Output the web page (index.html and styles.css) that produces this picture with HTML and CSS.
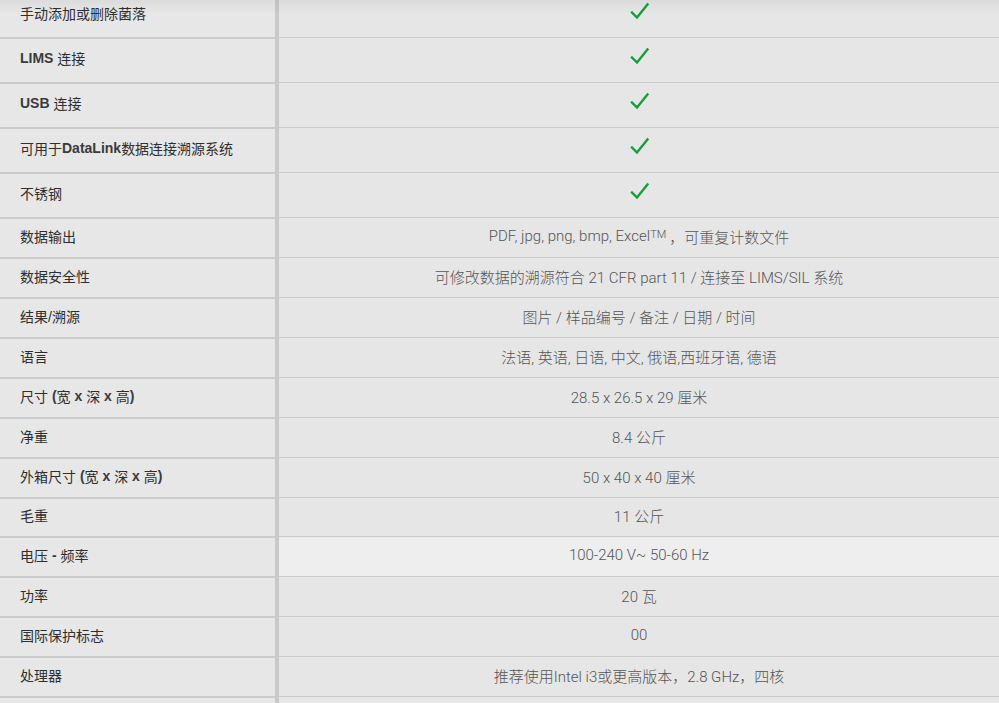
FILE: index.html
```html
<!DOCTYPE html>
<html lang="zh-CN">
<head>
<meta charset="utf-8">
<title>规格</title>
<link rel="stylesheet" href="styles.css">
</head>
<body>
<div class="viewport">
  <div class="shade"></div>
  <div class="spec">
    <div class="row tall"><div class="key">手动添加或删除菌落</div><div class="val"><svg class="check" viewBox="0 0 20 20" width="20" height="20"><polyline points="2,10.5 7,15.5 17.5,2.5"/></svg></div></div>
    <div class="row tall"><div class="key"><span class="lat">LIMS</span>&nbsp;连接</div><div class="val"><svg class="check" viewBox="0 0 20 20" width="20" height="20"><polyline points="2,10.5 7,15.5 17.5,2.5"/></svg></div></div>
    <div class="row tall"><div class="key"><span class="lat">USB</span>&nbsp;连接</div><div class="val"><svg class="check" viewBox="0 0 20 20" width="20" height="20"><polyline points="2,10.5 7,15.5 17.5,2.5"/></svg></div></div>
    <div class="row tall"><div class="key">可用于<span class="lat">DataLink</span>数据连接溯源系统</div><div class="val"><svg class="check" viewBox="0 0 20 20" width="20" height="20"><polyline points="2,10.5 7,15.5 17.5,2.5"/></svg></div></div>
    <div class="row tall"><div class="key">不锈钢</div><div class="val"><svg class="check" viewBox="0 0 20 20" width="20" height="20"><polyline points="2,10.5 7,15.5 17.5,2.5"/></svg></div></div>
    <div class="row"><div class="key">数据输出</div><div class="val">PDF, jpg, png, bmp, Excel<sup>TM</sup>，可重复计数文件</div></div>
    <div class="row"><div class="key">数据安全性</div><div class="val">可修改数据的溯源符合 21 CFR part 11 / 连接至 LIMS/SIL 系统</div></div>
    <div class="row"><div class="key">结果/溯源</div><div class="val">图片 / 样品编号 / 备注 / 日期 / 时间</div></div>
    <div class="row"><div class="key">语言</div><div class="val">法语, 英语, 日语, 中文, 俄语,西班牙语, 德语</div></div>
    <div class="row"><div class="key">尺寸 <span class="lat">(</span>宽 <span class="lat">x</span> 深 <span class="lat">x</span> 高<span class="lat">)</span></div><div class="val">28.5 x 26.5 x 29 厘米</div></div>
    <div class="row"><div class="key">净重</div><div class="val">8.4 公斤</div></div>
    <div class="row"><div class="key">外箱尺寸 <span class="lat">(</span>宽 <span class="lat">x</span> 深 <span class="lat">x</span> 高<span class="lat">)</span></div><div class="val">50 x 40 x 40 厘米</div></div>
    <div class="row short"><div class="key">毛重</div><div class="val">11 公斤</div></div>
    <div class="row hover"><div class="key">电压 <span class="lat">-</span> 频率</div><div class="val">100-240 V~ 50-60 Hz</div></div>
    <div class="row"><div class="key">功率</div><div class="val">20 瓦</div></div>
    <div class="row"><div class="key">国际保护标志</div><div class="val">00</div></div>
    <div class="row"><div class="key">处理器</div><div class="val">推荐使用Intel i3或更高版本，2.8 GHz，四核</div></div>
    <div class="row"><div class="key"></div><div class="val"></div></div>
  </div>
</div>
</body>
</html>
```
FILE: styles.css
```css
html, body {
  margin: 0;
  padding: 0;
  background: #e7e7e7;
}
.viewport {
  position: relative;
  height: 703px;
  overflow: hidden;
}
.shade {
  position: absolute;
  left: 0;
  right: 0;
  top: 0;
  height: 14px;
  background: linear-gradient(rgba(0,0,0,0.05), rgba(0,0,0,0));
  z-index: 2;
  pointer-events: none;
}
.spec {
  margin-top: -6px;
  display: flex;
  flex-direction: column;
}
.row {
  display: flex;
  height: 40px;
}
.row.tall { height: 45px; }
.row.short { height: 39px; }
.key {
  width: 255px;
  padding-left: 20px;
  padding-bottom: 5px;
  box-sizing: content-box;
  flex: none;
  display: flex;
  align-items: center;
  white-space: pre;
  background: #e7e7e7;
  border-bottom: 2px solid #cbcbcb;
  border-right: 4px solid #c9c9c9;
  font-family: "Liberation Sans", "Noto Sans CJK SC", sans-serif;
  font-size: 14px;
  font-weight: 400;
  color: #2e2e2e;
}
.key .lat {
  font-weight: 700;
  color: #3a3a3a;
}
.val {
  flex: 1;
  display: flex;
  align-items: center;
  justify-content: center;
  padding-bottom: 4px;
  background: #e6e6e6;
  border-bottom: 1px solid #cbcbcb;
  margin-bottom: 1px;
  font-family: Roboto, "Noto Sans CJK SC", sans-serif;
  font-size: 15px;
  font-weight: 300;
  color: #555;
}
.row.hover .val { background: #eeeeee; }
.val sup {
  font-size: 11px;
  font-weight: 300;
  position: relative;
  top: -2px;
  vertical-align: top;
  margin-right: 3px;
}
.check {
  display: block;
  margin-top: -3px;
  margin-left: 2px;
}
.check polyline {
  fill: none;
  stroke: #14a038;
  stroke-width: 2.4;
  stroke-linecap: square;
  stroke-linejoin: miter;
}
```
